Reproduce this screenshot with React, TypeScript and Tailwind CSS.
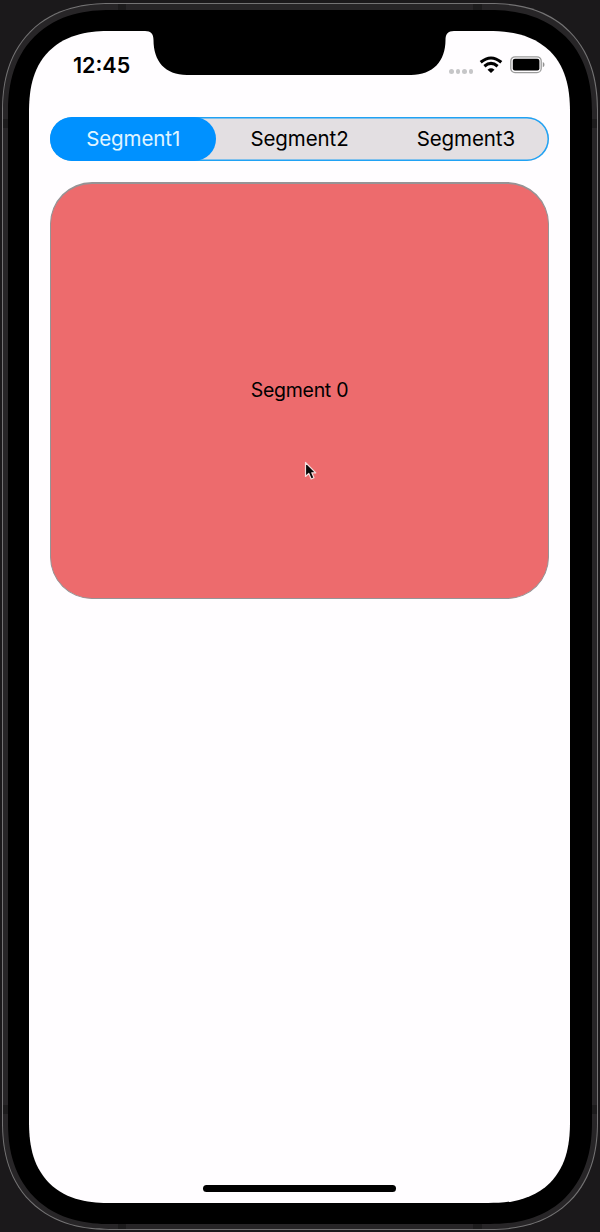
import { useState } from "react";

const segments = ["Segment1", "Segment2", "Segment3"];

function StatusIcons() {
  return (
    <div className="mt-[25px] mr-[24px] flex items-start">
      <div className="mt-[13px] flex gap-[2px]">
        {[0, 1, 2, 3].map((dot) => (
          <span key={dot} className="size-[4.5px] rounded-full bg-[#c6c6c8]" />
        ))}
      </div>
      <svg className="ml-[6px]" width="24" height="18" viewBox="0 0 24 18" fill="none" stroke="#000" strokeWidth="3.1">
        <path d="M1.7 6.300 Q12 -2.300 22.3 6.300" />
        <path d="M5.400 10.200 Q12 4.700 18.600 10.200" />
        <path d="M8.500 13.700 Q12 10.800 15.500 13.700 L12 17 Z" fill="#000" stroke="none" />
      </svg>
      <svg className="ml-[7px]" width="36" height="18" viewBox="0 0 36 18">
        <rect x="0.8" y="0.8" width="30.400" height="15.800" rx="4.200" fill="none" stroke="#9b9b9b" strokeWidth="1.300" />
        <rect x="2.800" y="2.800" width="26.600" height="11.800" rx="2" fill="#000" />
        <path d="M32.800 6v5.200c2.200-.8 2.200-4.400 0-5.200Z" fill="#929292" />
      </svg>
    </div>
  );
}

function Notch() {
  return (
    <svg className="absolute top-0 left-[116px]" width="309" height="45" viewBox="0 0 309 45">
      <path d="M0 0C6 0 8.500 3 8.500 9C8.500 30 20 44 42 44H266C288 44 300.500 30 300.500 9C300.500 3 303 0 309 0Z" fill="#000" />
    </svg>
  );
}

function AntennaBands() {
  return (
    <svg className="pointer-events-none absolute inset-0" width="600" height="1232" viewBox="0 0 600 1232" fill="#1c1b1c">
      <path d="M118 4h8v6h-8zM473 4h9v6h-9zM118 1224h8v5h-8zM473 1224h9v5h-9z" />
      <path d="M3 119h5v9H3zM592 119h5v9h-5zM3 1105h5v9H3zM592 1105h5v9h-5z" />
    </svg>
  );
}

export default function App() {
  const [selected, setSelected] = useState(0);

  return (
    <main className="relative h-[1232px] w-[600px] overflow-hidden bg-[#1b191b] px-[2px] pt-[3px] pb-[1px] font-['Inter','Liberation_Sans',sans-serif] text-black">
      <div className="rounded-[94px] border border-[#747374] bg-[#272527] px-[5px] pt-[6px] pb-[5px] supports-[corner-shape:squircle]:rounded-[108px] supports-[corner-shape:squircle]:[corner-shape:superellipse(1.2)]">
        <div className="h-[1214px] rounded-[88px] bg-black px-[21px] pt-[21px] supports-[corner-shape:squircle]:rounded-[102px] supports-[corner-shape:squircle]:[corner-shape:superellipse(1.2)]">
          <div className="relative flex h-[1172px] w-[541px] flex-col rounded-[68px] bg-[#fffdff] supports-[corner-shape:squircle]:rounded-[82px] supports-[corner-shape:squircle]:[corner-shape:superellipse(1.3)]">
            <Notch />
            <header className="flex h-[86px] shrink-0 items-start justify-between">
              <time className="pt-[21px] pl-[44px] text-[21.5px] leading-[26px] font-semibold">12:45</time>
              <StatusIcons />
            </header>
            <div className="flex flex-1 flex-col gap-[21px] px-[21px]">
              <div
                role="tablist"
                className="flex h-[44px] shrink-0 overflow-hidden rounded-full bg-[#e3dfe2] shadow-[inset_0_0_0_1.5px_#20a2f4]"
              >
                {segments.map((label, index) => (
                  <button
                    key={label}
                    role="tab"
                    aria-selected={selected === index}
                    onClick={() => setSelected(index)}
                    className={
                      selected === index
                        ? "flex-1 rounded-full bg-[#0091ff] text-[20.5px] leading-[24px] tracking-[-0.1px] text-[#e0f5ff]"
                        : "flex-1 rounded-full text-[20.5px] leading-[24px] tracking-[-0.1px]"
                    }
                  >
                    {label}
                  </button>
                ))}
              </div>
              <section className="flex h-[417px] shrink-0 items-center justify-center rounded-[42px] border border-t-2 border-[#969395] bg-[#ed6b6d] text-[19.5px] tracking-[-0.3px]">
                Segment {selected}
              </section>
            </div>
            <div className="mb-[11px] h-[7px] w-[193px] self-center rounded-full bg-black" />
          </div>
        </div>
      </div>
      <AntennaBands />
      <svg className="absolute top-[461px] left-[304px]" width="14" height="20" viewBox="0 0 14 20">
        <path d="M1.500 1.500V15.500L4.800 12.500L7.200 18L10 16.800L7.800 11.800H11.800Z" fill="#080808" stroke="#f4dddd" strokeWidth="1.200" strokeLinejoin="round" />
      </svg>
    </main>
  );
}
